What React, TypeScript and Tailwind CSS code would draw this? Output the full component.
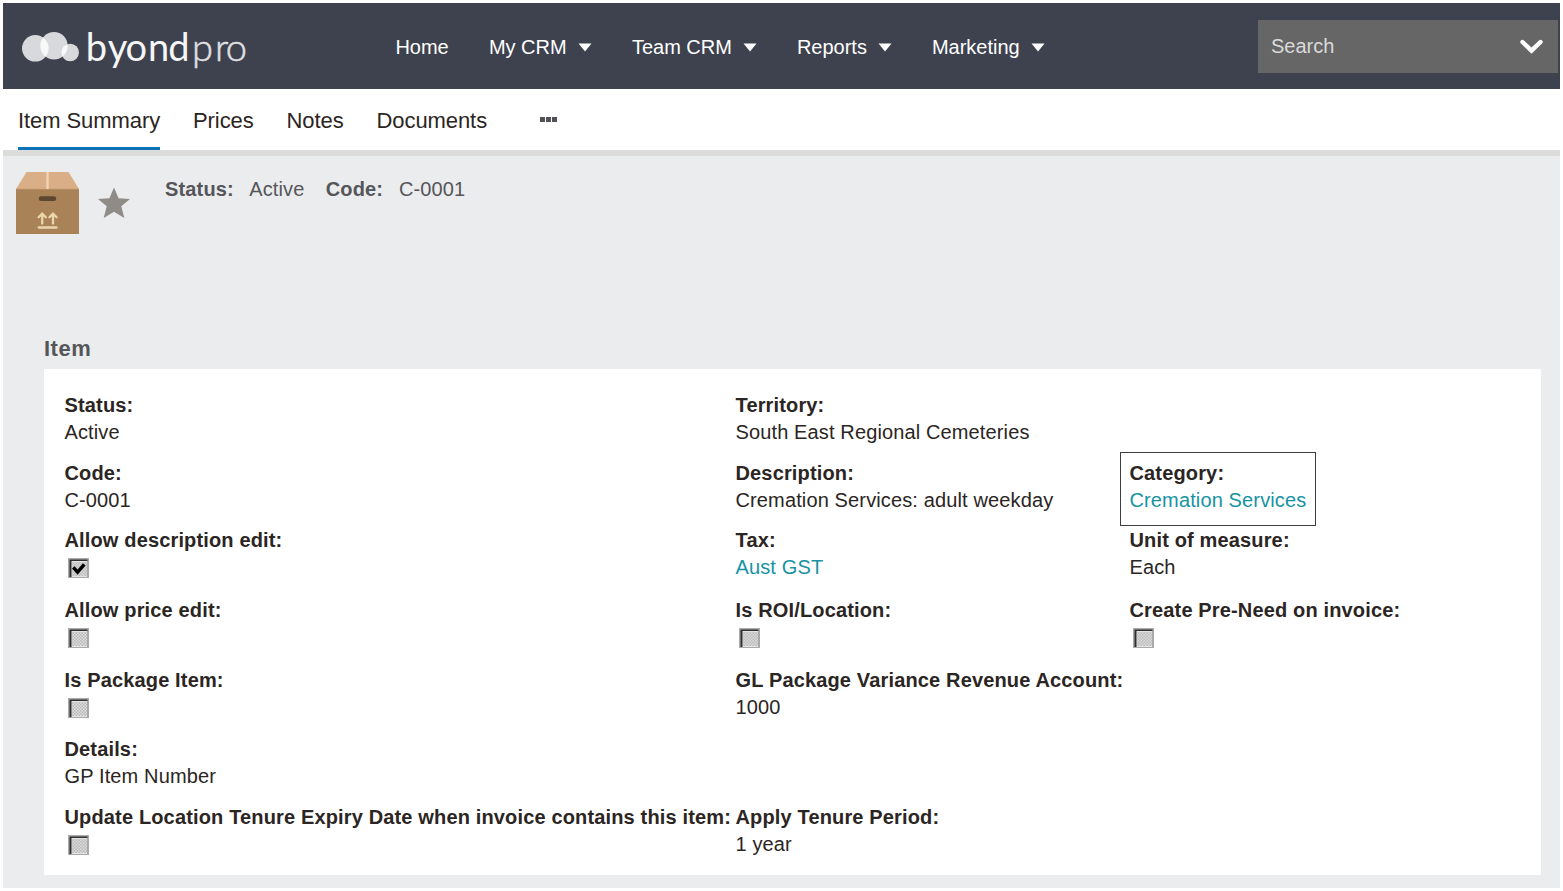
import clsx from "clsx";
import React from "react";

interface FieldData {
  label: string;
  value?: string;
  link?: boolean;
  checked?: boolean;
  highlighted?: boolean;
}

interface RowData {
  height: string;
  fields: FieldData[];
}

const NAV_ITEMS = [
  { label: "Home", menu: false, className: "w-[93.5px]" },
  { label: "My CRM", menu: true, className: "w-[143px]" },
  { label: "Team CRM", menu: true, className: "w-[165px]" },
  { label: "Reports", menu: true, className: "w-[135px]" },
  { label: "Marketing", menu: true, className: "w-[120px]" },
];

const ROWS: RowData[] = [
  {
    height: "h-[68px]",
    fields: [
      { label: "Status:", value: "Active" },
      { label: "Territory:", value: "South East Regional Cemeteries" },
    ],
  },
  {
    height: "h-[67px]",
    fields: [
      { label: "Code:", value: "C-0001" },
      { label: "Description:", value: "Cremation Services: adult weekday" },
      {
        label: "Category:",
        value: "Cremation Services",
        link: true,
        highlighted: true,
      },
    ],
  },
  {
    height: "h-[70px]",
    fields: [
      { label: "Allow description edit:", checked: true },
      { label: "Tax:", value: "Aust GST", link: true },
      { label: "Unit of measure:", value: "Each" },
    ],
  },
  {
    height: "h-[70px]",
    fields: [
      { label: "Allow price edit:", checked: false },
      { label: "Is ROI/Location:", checked: false },
      { label: "Create Pre-Need on invoice:", checked: false },
    ],
  },
  {
    height: "h-[69px]",
    fields: [
      { label: "Is Package Item:", checked: false },
      { label: "GL Package Variance Revenue Account:", value: "1000" },
    ],
  },
  {
    height: "h-[68px]",
    fields: [{ label: "Details:", value: "GP Item Number" }],
  },
  {
    height: "h-[72px]",
    fields: [
      {
        label:
          "Update Location Tenure Expiry Date when invoice contains this item:",
        checked: false,
      },
      { label: "Apply Tenure Period:", value: "1 year" },
    ],
  },
];

const Logo: React.FC = () => (
  <svg width="240" height="70" viewBox="18 15 240 70" aria-label="byondpro">
    <g fill="#fff" fillOpacity="0.8">
      <circle cx="35.3" cy="48.3" r="13.3" />
      <circle cx="54" cy="45.7" r="13.7" />
      <circle cx="70.2" cy="52.5" r="8.8" />
    </g>
    <g fontFamily="Lato, sans-serif" fontSize="38">
      <text x="85.8 107.8 125.6 147.9 168.2" y="61.3" fill="#f6f6f7">
        byond
      </text>
      <text
        x="192 214.9 225.8"
        y="61.3"
        fill="#e0e1e3"
        stroke="#e0e1e3"
        strokeWidth="0.5"
        fontWeight="300"
      >
        pro
      </text>
    </g>
  </svg>
);

const PackageIcon: React.FC = () => (
  <svg width="63" height="62" viewBox="0 0 63 62">
    <path d="M10.5 0H52.5L63 17H0Z" fill="#daae86" />
    <path d="M0 17H63V62H0Z" fill="#a98258" />
    <path d="M0 17.3H63" stroke="#b98f66" strokeWidth="1" />
    <path d="M31.5 0V17" stroke="#f0d3b8" strokeWidth="2.4" />
    <rect x="22.7" y="24.3" width="17.6" height="4.8" rx="2.4" fill="#5e4732" />
    <g stroke="#ecd6ac" strokeWidth="2.3" strokeLinecap="round" fill="none">
      <path d="M26.2 51.5V42M22.6 45.3L26.2 41.7L29.8 45.3" />
      <path d="M37 51.5V42M33.4 45.3L37 41.7L40.6 45.3" />
      <path d="M22.7 55.5H40.5" />
    </g>
  </svg>
);

const Checkbox: React.FC<{ checked: boolean }> = ({ checked }) => (
  <svg
    width="21"
    height="20"
    viewBox="0 0 21 20"
    className={clsx("ml-[3.5px]", checked ? "mt-[4px]" : "mt-[3.5px]")}
    role="checkbox"
    aria-checked={checked}
  >
    <defs>
      <pattern id="dither" width="3" height="3" patternUnits="userSpaceOnUse">
        <rect width="3" height="3" fill="#dcdcdc" />
        <rect width="1.5" height="1.5" fill="#bababa" />
        <rect x="1.5" y="1.5" width="1.5" height="1.5" fill="#bababa" />
      </pattern>
    </defs>
    <rect width="21" height="20" fill="#a9abab" />
    <rect x="1.5" y="1.5" width="18" height="17.5" fill="#303030" />
    <rect x="3.5" y="3" width="16" height="16" fill="#e4e4e4" />
    <rect x="4" y="4" width="15" height="14" fill="url(#dither)" />
    {checked && (
      <path
        d="M5.3 9.3L9.6 14.2L16.3 6.3"
        stroke="#000"
        strokeWidth="3.4"
        fill="none"
      />
    )}
  </svg>
);

const Field: React.FC<FieldData> = ({
  label,
  value,
  link,
  checked,
  highlighted,
}) => (
  <div className="relative leading-[27px] whitespace-nowrap">
    <div className="font-bold tracking-[0.15px]">{label}</div>
    {checked !== undefined ? (
      <Checkbox checked={checked} />
    ) : (
      <div className={clsx("tracking-[0.13px]", link && "text-[#1793a3]")}>
        {value}
      </div>
    )}
    {highlighted && (
      <div className="absolute -top-[8px] -left-[9.5px] h-[74px] w-[196px] border border-[#3c3e42]" />
    )}
  </div>
);

const App: React.FC = () => {
  return (
    <div className="h-[891px] w-[1563px] overflow-hidden bg-white p-[3px] font-['Liberation_Sans',Arial,sans-serif] text-xl text-[#2b2523]">
      <header className="flex h-[86px] items-start bg-[#3e424f] text-white">
        <div className="w-[392.4px] pt-3 pl-[15px]">
          <Logo />
        </div>
        <nav className="flex pt-[29px] leading-[30px]">
          {NAV_ITEMS.map((item) => (
            <div
              key={item.label}
              className={clsx("flex items-center", item.className)}
            >
              <span>{item.label}</span>
              {item.menu && (
                <svg width="14" height="9" className="mt-px ml-[11.5px]">
                  <path d="M0.5 0.5H13.5L7 8.5Z" fill="#fff" />
                </svg>
              )}
            </div>
          ))}
        </nav>
        <div className="mt-[17px] mr-[2px] ml-auto flex h-[53px] w-[300px] items-center justify-between bg-[#666] pr-[15px] pl-[13px] text-[#dadada]">
          <span className="pb-[2px]">Search</span>
          <svg width="23" height="15" viewBox="0 0 23 15">
            <path
              d="M2.5 3L11.5 11.7L20.5 3"
              stroke="#fff"
              strokeWidth="4.4"
              strokeLinecap="round"
              fill="none"
            />
          </svg>
        </div>
      </header>

      <div className="flex h-[67px] border-b-[6px] border-[#dcddda] pl-[15px] text-[22px] leading-[63px] tracking-[-0.08px]">
        <div className="mr-[33px] h-[61px] w-[142px] border-b-[3px] border-[#0b74b8] whitespace-nowrap">
          Item Summary
        </div>
        <div className="w-[93.5px]">Prices</div>
        <div className="w-[90px]">Notes</div>
        <div className="w-[163px]">Documents</div>
        <div className="flex items-center gap-px">
          <span className="size-[5px] bg-[#505255]" />
          <span className="size-[5px] bg-[#505255]" />
          <span className="size-[5px] bg-[#505255]" />
        </div>
      </div>

      <main className="h-[732px] bg-[#ebeced]">
        <div className="flex h-[179px] items-start pt-4 pl-[13px] text-[#55565a]">
          <PackageIcon />
          <svg width="32" height="31" className="mt-[15px] ml-[19px]">
            <path
              d="M16 0.5L20.6 11.3L32 12L23.3 19.3L26.3 31L16 24.8L5.7 31L8.7 19.3L0 12L11.4 11.3Z"
              fill="#8f8b86"
            />
          </svg>
          <div className="ml-[35px] flex pt-[3px] leading-[28px] whitespace-nowrap">
            <span className="w-[84.2px] font-bold tracking-[0.15px]">
              Status:
            </span>
            <span className="w-[76.5px] tracking-[0.12px]">Active</span>
            <span className="w-[73.3px] font-bold tracking-[0.15px]">
              Code:
            </span>
            <span className="tracking-[0.12px]">C-0001</span>
          </div>
        </div>

        <h2 className="ml-[41px] h-[34px] text-[22px] leading-[27px] font-bold tracking-[0.5px] text-[#55565a]">
          Item
        </h2>
        <section className="ml-[41px] h-[506px] w-[1497px] bg-white pt-[23px] pl-[20.5px]">
          {ROWS.map((row, i) => (
            <div
              key={i}
              className={clsx("grid grid-cols-[671px_394px_1fr]", row.height)}
            >
              {row.fields.map((field) => (
                <Field key={field.label} {...field} />
              ))}
            </div>
          ))}
        </section>
      </main>
    </div>
  );
};

export default App;
